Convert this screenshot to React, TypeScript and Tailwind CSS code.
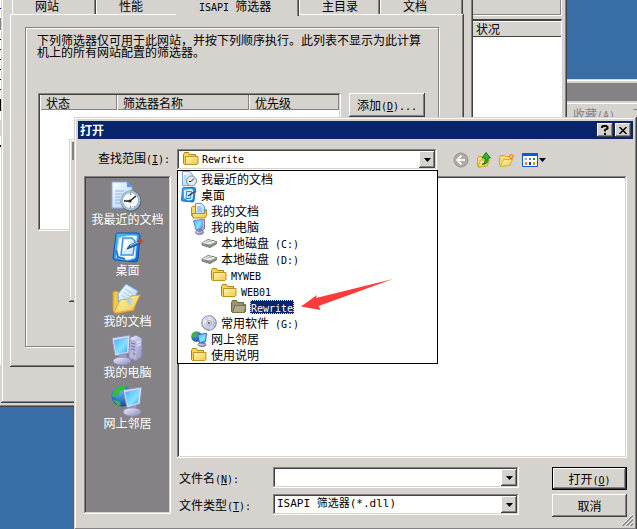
import type { ReactNode } from "react";

const windowEdge =
  "bg-[#d6d3ce] shadow-[inset_-1px_-1px_#424142,inset_1px_1px_#d6d3ce,inset_-2px_-2px_#848284,inset_2px_2px_#ffffff]";
const raised =
  "bg-[#d6d3ce] shadow-[inset_-1px_-1px_#424142,inset_1px_1px_#ffffff,inset_-2px_-2px_#848284]";
const sunken =
  "shadow-[inset_-1px_-1px_#ffffff,inset_1px_1px_#848284,inset_-2px_-2px_#d6d3ce,inset_2px_2px_#424142]";

/* Latin text, half the width of a Chinese character */
function En({ children }: { children: ReactNode }) {
  return (
    <span className="font-['DejaVu_Sans_Mono',monospace] text-[10px] leading-none whitespace-pre">
      {children}
    </span>
  );
}

function Gradients() {
  return (
    <svg className="absolute h-0 w-0" aria-hidden="true">
      <defs>
        <linearGradient id="folder" x1="0" y1="0" x2="1" y2="1">
          <stop offset="0" stopColor="#fff7b5" />
          <stop offset="1" stopColor="#efc74a" />
        </linearGradient>
        <linearGradient id="screen" x1="0" y1="0" x2="1" y2="1">
          <stop offset="0" stopColor="#4cacf4" />
          <stop offset="0.6" stopColor="#84e4ff" />
          <stop offset="1" stopColor="#3a9cf0" />
        </linearGradient>
        <linearGradient id="case" x1="0" y1="0" x2="1" y2="1">
          <stop offset="0" stopColor="#f4f4fc" />
          <stop offset="1" stopColor="#8888bc" />
        </linearGradient>
        <linearGradient id="paper" x1="0" y1="0" x2="1" y2="1">
          <stop offset="0" stopColor="#ffffff" />
          <stop offset="1" stopColor="#a8ccf4" />
        </linearGradient>
        <linearGradient id="blue" x1="0" y1="0" x2="1" y2="1">
          <stop offset="0" stopColor="#4cc4ff" />
          <stop offset="1" stopColor="#0a64d0" />
        </linearGradient>
        <radialGradient id="globe" cx="0.4" cy="0.3" r="0.8">
          <stop offset="0" stopColor="#5ab4ff" />
          <stop offset="1" stopColor="#0a3c9c" />
        </radialGradient>
        <radialGradient id="silver" cx="0.35" cy="0.3" r="0.8">
          <stop offset="0" stopColor="#ffffff" />
          <stop offset="1" stopColor="#a4a8c4" />
        </radialGradient>
      </defs>
    </svg>
  );
}

function Svg({ size, children }: { size: number; children: ReactNode }) {
  return (
    <svg
      width={size}
      height={size}
      viewBox={size === 32 ? "0 0 32 32" : "0 0 16 16"}
      className="shrink-0"
      aria-hidden="true"
    >
      {children}
    </svg>
  );
}

/* 32px icons of the places bar */

function RecentLarge() {
  return (
    <Svg size={32}>
      <path d="M1 1h15l5 5v21H1z" fill="url(#paper)" stroke="#84b0f0" />
      <path d="M16 1v5h5z" fill="#4c94ec" />
      <path d="M4 10h9M4 13h7M4 16h5M4 19h5M4 22h6" stroke="#84b4f4" />
      <circle cx="20" cy="20" r="10.500" fill="#566878" />
      <circle cx="19.500" cy="19.500" r="10" fill="#a4bccc" />
      <circle cx="19.500" cy="19.500" r="7.500" fill="#f3f8fb" />
      <path d="M19 20l6-5M19 20h-6" stroke="#222" strokeWidth="1.500" />
      <path d="M19.500 12v2M19.500 25v2M23 25l1 1" stroke="#789" />
      <circle cx="19" cy="20" r="1.500" fill="#222" />
    </Svg>
  );
}

function DesktopLarge() {
  return (
    <Svg size={32}>
      <path d="M4 3q0-2 2-2h19q3 0 3 3l-2 23q0 3-3 3L3 28q-2 0-2-2z" fill="url(#blue)" stroke="#0c58b4" />
      <path d="M7 6q6-3 18-2l-2 22-7 2q-7 0-12-3z" fill="#fcfcf0" stroke="#a4dcff" />
      <path d="M4 18l2 7 7 2" fill="none" stroke="#1c7cdc" strokeWidth="2" />
      <path d="M11 6h9l3 3-2 14H9z" fill="#d4ecff" stroke="#3c94e8" strokeWidth="1.500" />
      <path d="M12 8h7l-8 12z" fill="#fff" />
      <path d="M15 17l3-4 9-4 2 2-9 4z" fill="#3c78b4" stroke="#144878" />
      <path d="M18 13.500l8-3.500" stroke="#a4d4f4" />
      <path d="M27 10l3-2" stroke="#cc4428" strokeWidth="4" />
    </Svg>
  );
}

function DocumentsLarge() {
  return (
    <Svg size={32}>
      <path d="M2 9l2-1 4 1 1 3 15-3-1 18-18 4-3-3z" fill="#f4c850" stroke="#d09820" />
      <path d="M7 11L15 1l12 7-6 12-13 5z" fill="url(#paper)" stroke="#6ca8e8" />
      <path d="M12 9l8 5M14 6l8 5M10 12l8 5" stroke="#a4d0f8" />
      <path d="M3 30l6-13 9-1 2-3 9-1-7 15z" fill="url(#folder)" stroke="#dca830" />
      <path d="M15 18l7-3-3 8z" fill="#a8d0f8" />
    </Svg>
  );
}

function ComputerLarge() {
  return (
    <Svg size={32}>
      <path d="M18 4l7-3 6 3v19l-6 4-7-3z" fill="url(#case)" stroke="#8484b4" />
      <path d="M19 5l6 2v18l-6-2z" fill="#b4b4dc" />
      <path d="M20 9l4 1M20 12l4 1M20 15l4 1" stroke="#7070a8" />
      <path d="M26 9l4-2M26 12l4-2" stroke="#f0f0ff" />
      <circle cx="23" cy="20" r="1" fill="#48a848" />
      <path d="M8 18h7l1 7H7z" fill="#9ca0c8" />
      <ellipse cx="11" cy="27" rx="9" ry="4" fill="url(#case)" stroke="#8c8cb8" />
      <path d="M1 4l18-3-1 18-14 3z" fill="#dcdcf0" stroke="#8c8cbc" />
      <path d="M3 6l14-3-1 15-11 2z" fill="url(#screen)" />
    </Svg>
  );
}

function NetworkLarge() {
  return (
    <Svg size={32}>
      <circle cx="11" cy="11" r="10.500" fill="url(#globe)" />
      <path d="M4 4q5-4 11-3l-2 4-4 1-2 5-5 1-1-2zM2 15l6 1 2 4-3 1zM14 9l4 2-2 5-4-3z" fill="#3cb83c" />
      <path d="M18 20h7l1 5h-9z" fill="#9ca0c8" />
      <ellipse cx="21" cy="27" rx="9" ry="4.200" fill="url(#case)" stroke="#8c8cb8" />
      <path d="M12 5l19-3-2 17-13 4z" fill="#dcdcf0" stroke="#8c8cbc" />
      <path d="M14 7l15-3-2 14-10 3z" fill="url(#screen)" />
    </Svg>
  );
}

/* 16px icons of the drop-down */

function Recent() {
  return (
    <Svg size={16}>
      <path d="M1.500.5h7l3 3v11h-10z" fill="url(#paper)" stroke="#7ca4d8" />
      <path d="M3 5h3M3 7h2M3 9h2" stroke="#9cc0f0" />
      <circle cx="10.500" cy="10" r="5" fill="#dfe9f0" stroke="#7c90a0" />
      <path d="M10 10.500l3-3M10 10.500H8" stroke="#223" />
    </Svg>
  );
}

function Desktop() {
  return (
    <Svg size={16}>
      <path d="M1.500 2q0-1.500 1.500-1.500h10q1.500 0 1.500 1l-1.500 12q0 1.500-1.500 1.500L1.500 14q-1 0-1-1z" fill="url(#blue)" stroke="#1478d8" />
      <path d="M3.500 3.500L11 2.500l1 2-1 8-4 .5-3.500-2z" fill="#fcfcf4" stroke="#d8f0ff" />
      <path d="M5.500 4.500h5l-1 7h-4.500z" fill="#d4ecff" stroke="#2c84d8" />
      <path d="M7 9L13 5" stroke="#144878" strokeWidth="1.500" />
      <path d="M13 5.500l2-1.500" stroke="#c43c20" strokeWidth="2" />
    </Svg>
  );
}

function Documents() {
  return (
    <Svg size={16}>
      <path d="M.5 4.500l1-1h3v10h-3l-1-1z" fill="#f7d76b" stroke="#b58a18" />
      <path d="M4.500.5h6l3 3v9h-9z" fill="url(#paper)" stroke="#5a94dc" />
      <path d="M6 4h4M6 6h5M6 8h5" stroke="#6ca4e4" />
      <path d="M1.500 10.500h12l1-4h1v6l-1.500 2.500h-12z" fill="url(#folder)" stroke="#b58a18" />
    </Svg>
  );
}

function Computer() {
  return (
    <Svg size={16}>
      <path d="M10 1l3.500-.5v9.500l-3 2z" fill="url(#case)" stroke="#7878ac" />
      <ellipse cx="8.500" cy="13.200" rx="4" ry="2.200" fill="url(#case)" stroke="#6c6ca4" />
      <path d="M7 10h3v3H7z" fill="#8488b4" />
      <path d="M2.500 1.500l8.500-1v8.500l-6 2z" fill="url(#screen)" stroke="#5c88cc" />
    </Svg>
  );
}

function Disk() {
  return (
    <Svg size={16}>
      <path d="M1 8l6-3.500 8.500 2v2.500L9 12.500 1 10z" fill="#8c8e8c" stroke="#787a78" />
      <path d="M1 8l6-3 8 1.700L9 9.500z" fill="#ececec" />
      <path d="M5 7.500l4-1.500 2 .8" stroke="#b4b4b4" fill="none" />
      <path d="M11.500 10l2-.8" stroke="#64cc64" />
    </Svg>
  );
}

function Folder({ open }: { open?: boolean }) {
  return (
    <Svg size={16}>
      <path
        d="M.5 3.500l1-2h4l1 2h6v2h2v7l-1 1h-12l-1-1z"
        fill={open ? "#98947c" : "#f7d35a"}
        stroke={open ? "#686444" : "#ad8414"}
      />
      <path
        d={open ? "M1.500 13.500l2.500-7h11l-2 7z" : "M2.500 5.500h12.500v7l-1 1h-11.500z"}
        fill={open ? "#b0ac84" : "url(#folder)"}
        stroke={open ? "#787450" : "#bd9420"}
      />
    </Svg>
  );
}

function Cd() {
  return (
    <Svg size={16}>
      <circle cx="8" cy="8" r="7.300" fill="url(#silver)" stroke="#8488a8" />
      <path d="M8 8L3 3.500A7 7 0 0 1 7 1zM8 8l5 4.500A7 7 0 0 1 9 15z" fill="#d8c8f4" />
      <circle cx="8" cy="8" r="2.300" fill="#fff" stroke="#9498b8" />
      <circle cx="8" cy="8" r="1" fill="#445" />
    </Svg>
  );
}

function Network() {
  return (
    <Svg size={16}>
      <circle cx="5.500" cy="5.500" r="5.300" fill="url(#globe)" />
      <path d="M1 3q3-3 6-2L5 4 3 7 1 6zM2 8l3 1v1z" fill="#38b838" />
      <ellipse cx="11" cy="13.500" rx="4" ry="2" fill="url(#case)" stroke="#7474a8" />
      <path d="M10 11h3v2h-3z" fill="#8488b4" />
      <path d="M6.500 3.500l9-1-1 8-6 1.500z" fill="url(#screen)" stroke="#3c64a4" />
    </Svg>
  );
}

/* Toolbar icons */

function Back() {
  return (
    <Svg size={16}>
      <circle cx="8" cy="8" r="7" fill="#adaaa5" stroke="#94928c" />
      <path d="M8.500 3.500L4 8l4.500 4.500M4.500 8H12" fill="none" stroke="#f0f0ee" strokeWidth="2" />
    </Svg>
  );
}

function UpFolder() {
  return (
    <Svg size={16}>
      <path d="M1.500 5.500l1-1h3l1 1h5v8l-9 1.500-1-1z" fill="#f7db73" stroke="#d8a420" />
      <path d="M2 15l2.500-7h9l-2.500 6z" fill="url(#folder)" stroke="#d8a420" />
      <path d="M6 12.500q4-2 3-6.500H6l4-5.500L14.500 6H12q1 6-6 6.500z" fill="#31b521" stroke="#147810" />
    </Svg>
  );
}

function NewFolder() {
  return (
    <Svg size={16}>
      <path d="M.5 5.500l1-2h4l1 1h5v8l-9 2-2-1z" fill="#f7db73" stroke="#d8a420" />
      <path d="M1.500 14.500l3-7h9l-3 6z" fill="url(#folder)" stroke="#dcb034" />
      <path d="M12.500 2v5M10 4.500h5M11 3l3 3M14 3l-3 3" stroke="#ef7131" strokeWidth="1.500" />
      <circle cx="12.500" cy="4.500" r="1.300" fill="#ffd890" />
    </Svg>
  );
}

function Views() {
  return (
    <Svg size={16}>
      <path d="M.5 1.500h15v13H.5z" fill="#fff" stroke="#0c5ccc" />
      <path d="M0 1h16v3H0z" fill="#0c5ccc" />
      <path d="M3 6h2v2H3z" fill="#a49cc4" />
      <path d="M7 6h2v2H7z" fill="#3c84e4" />
      <path d="M11 6h2v2h-2z" fill="#189418" />
      <path d="M3 10h2v3H3z" fill="#f07850" />
      <path d="M7 10h2v3H7z" fill="#103ca4" />
      <path d="M11 10h2v3h-2z" fill="#d0a010" />
    </Svg>
  );
}

function Triangle() {
  return (
    <svg width="7" height="4" viewBox="0 0 7 4" className="shrink-0" aria-hidden="true">
      <path d="M0 0h7L3.500 4z" fill="#000" />
    </svg>
  );
}

function DropArrow() {
  return (
    <span className={`pointer-events-none flex w-4 shrink-0 items-center justify-center ${raised}`}>
      <Triangle />
    </span>
  );
}

const places = [
  { name: "我最近的文档", icon: <RecentLarge /> },
  { name: "桌面", icon: <DesktopLarge /> },
  { name: "我的文档", icon: <DocumentsLarge /> },
  { name: "我的电脑", icon: <ComputerLarge /> },
  { name: "网上邻居", icon: <NetworkLarge /> },
];

const folders = [
  { zh: "我最近的文档", en: "", indent: "pl-[3px]", icon: <Recent /> },
  { zh: "桌面", en: "", indent: "pl-[3px]", icon: <Desktop /> },
  { zh: "我的文档", en: "", indent: "pl-[13px]", icon: <Documents /> },
  { zh: "我的电脑", en: "", indent: "pl-[13px]", icon: <Computer /> },
  { zh: "本地磁盘", en: " (C:)", indent: "pl-[23px]", icon: <Disk /> },
  { zh: "本地磁盘", en: " (D:)", indent: "pl-[23px]", icon: <Disk /> },
  { zh: "", en: "MYWEB", indent: "pl-[33px]", icon: <Folder /> },
  { zh: "", en: "WEB01", indent: "pl-[43px]", icon: <Folder /> },
  { zh: "", en: "Rewrite", indent: "pl-[53px]", icon: <Folder open />, selected: true },
  { zh: "常用软件", en: " (G:)", indent: "pl-[23px]", icon: <Cd /> },
  { zh: "网上邻居", en: "", indent: "pl-[13px]", icon: <Network /> },
  { zh: "使用说明", en: "", indent: "pl-[13px]", icon: <Folder /> },
];

const tabs = [
  { zh: "网站", width: "w-[84px]" },
  { zh: "性能", width: "w-[80px]" },
  { zh: "筛选器", en: "ISAPI ", width: "w-[123px]", active: true },
  { zh: "主目录", width: "w-[81px]" },
  { zh: "文档", width: "w-[83px]" },
];

function ConsoleWindow() {
  return (
    <section className={`absolute -top-1 -left-1 flex h-[411px] w-[571px] justify-between pt-1 pr-[5px] pl-1 ${windowEdge}`}>
      <div className="flex h-[365px] w-1 flex-col gap-[9px] bg-white pt-2">
        <i className="h-px bg-[#0000ff]" />
        <i className="h-3 bg-[#848284]" />
        <i className="h-px bg-black" />
        <i className="h-px bg-black" />
        <i className="h-px bg-black" />
        <i className="h-px bg-black" />
        <i className="h-px bg-black" />
        <i className="h-px bg-black" />
        <i className="h-3 bg-black" />
        <i className="h-4 bg-[#d6d3ce]" />
        <i className="h-0.5 bg-black" />
      </div>
      <div className="flex w-[92px] flex-col">
        <div className="h-4 border-r border-b border-white shadow-[inset_-1px_-1px_#848284]" />
        <div className="mt-[3px] flex-1 border-t-2 border-r border-t-[#424142] border-r-white bg-white">
          <div className="h-4 border-b border-[#424142] bg-[#d6d3ce] pl-1.5 leading-[15px] shadow-[inset_0_1px_#fff]">
            状况
          </div>
        </div>
      </div>
    </section>
  );
}

function BrowserWindow() {
  return (
    <section className={`absolute top-[79px] -right-10 left-[563px] h-[60px] px-1 pt-1 ${windowEdge}`}>
      <div className="h-[18px] bg-[#848284]" />
      <div className="mt-0.5 flex gap-[17px] border-t border-white pt-[3px] pl-1.5 leading-[14px] whitespace-nowrap text-[#848284]">
        <span>
          收藏<En>(<u>A</u>)</En>
        </span>
        <span>工具</span>
      </div>
    </section>
  );
}

function PropertiesWindow() {
  return (
    <section className={`absolute -top-1 left-px flex h-[407px] w-[472px] flex-col px-[9px] pt-1 pb-9 ${windowEdge}`}>
      <div role="tablist" className="flex h-3.5 shrink-0 pl-0.5">
        {tabs.map((tab) => (
          <button
            key={tab.zh}
            role="tab"
            aria-selected={!!tab.active}
            className={`flex items-baseline pl-[23px] leading-[12px] whitespace-pre ${tab.width} ${
              tab.active
                ? "relative h-4 bg-[#d6d3ce] shadow-[inset_-1px_0_#424142,inset_-2px_0_#848284]"
                : tab.zh === "性能"
                  ? "shadow-[inset_1px_0_#ffffff]"
                  : "shadow-[inset_1px_0_#ffffff,inset_-1px_0_#424142,inset_-2px_0_#848284]"
            }`}
          >
            {tab.en && <En>{tab.en}</En>}
            {tab.zh}
          </button>
        ))}
      </div>
      <div className={`flex-1 pt-[13px] pr-[25px] pb-5 pl-[15px] ${raised}`}>
        <div className="h-full border border-[#848284] pt-1.5 pl-[11px] shadow-[inset_1px_1px_#ffffff,1px_1px_#ffffff]">
          <p className="leading-[12px] whitespace-nowrap">
            下列筛选器仅可用于此网站，并按下列顺序执行。此列表不显示为此计算
            <br />
            机上的所有网站配置的筛选器。
          </p>
          <div className="mt-[35px] flex gap-2 pl-px">
            <div className={`h-[138px] w-[303px] bg-white p-0.5 ${sunken}`}>
              <table className="w-full table-fixed border-collapse text-left">
                <thead>
                  <tr className="h-[15px] bg-[#d6d3ce] leading-[14px] *:p-0 *:pl-1.5 *:font-normal *:shadow-[inset_1px_0_#ffffff,inset_-1px_-1px_#848284]">
                    <th className="w-[77px]">状态</th>
                    <th className="w-[132px]">筛选器名称</th>
                    <th>优先级</th>
                  </tr>
                </thead>
              </table>
            </div>
            <button className={`h-6 w-[76px] leading-[14px] ${raised}`}>
              添加<En>(<u>D</u>)...</En>
            </button>
          </div>
        </div>
      </div>
    </section>
  );
}

function LookIn() {
  return (
    <div className="relative w-[260px]">
      <div className={`flex h-[21px] bg-white p-0.5 ${sunken}`}>
        <span className="pl-1">
          <Folder />
        </span>
        <select
          id="look-in"
          className="min-w-0 flex-1 appearance-none bg-transparent pl-[3px] font-['DejaVu_Sans_Mono',monospace] text-[10px] outline-none"
        >
          <option>Rewrite</option>
        </select>
        <DropArrow />
      </div>
      <ul role="listbox" className="absolute top-full left-0 z-10 w-[261px] border border-black bg-white">
        {folders.map((folder, i) => (
          <li
            key={i}
            role="option"
            aria-selected={!!folder.selected}
            className={`flex h-4 items-center gap-[3px] leading-[14px] ${folder.indent}`}
          >
            {folder.icon}
            <span
              className={
                folder.selected
                  ? "bg-[#08246b] px-px text-white outline-1 -outline-offset-1 outline-[#f7db94] outline-dotted"
                  : "px-px"
              }
            >
              {folder.zh}
              {folder.en && <En>{folder.en}</En>}
            </span>
          </li>
        ))}
        {/* Pointer at the chosen folder */}
        <svg
          width="93"
          height="32"
          viewBox="0 0 93 32"
          className="pointer-events-none absolute top-[108px] left-[123px]"
          aria-hidden="true"
        >
          <path d="M0 27.500L16 16l-1 3L92 0 17.500 27l2 4z" fill="#ff3a3a" />
        </svg>
      </ul>
    </div>
  );
}

function OpenDialog() {
  return (
    <section
      role="dialog"
      aria-labelledby="dialog-title"
      className={`absolute top-[117px] right-0 -bottom-px left-[74px] flex flex-col p-1 ${windowEdge}`}
    >
      <header className="flex h-[18px] shrink-0 items-center gap-0.5 bg-[#08246b] px-0.5">
        <h1 id="dialog-title" className="flex-1 text-xs font-bold text-white">
          打开
        </h1>
        <button aria-label="帮助" className={`flex h-3.5 w-4 items-center justify-center ${raised}`}>
          <svg width="8" height="10" viewBox="0 0 8 10" aria-hidden="true">
            <path d="M1 3V2l1-1h3l1.500 1v1.500L4 5v1.500M4 8v2" fill="none" stroke="#000" strokeWidth="2" />
          </svg>
        </button>
        <button aria-label="关闭" className={`flex h-3.5 w-4 items-center justify-center ${raised}`}>
          <svg width="8" height="7" viewBox="0 0 8 7" aria-hidden="true">
            <path d="M.5 0l7 7M7.500 0l-7 7" stroke="#000" strokeWidth="1.500" />
          </svg>
        </button>
      </header>

      <div className="flex h-[37px] shrink-0 items-center px-1.5">
        <label htmlFor="look-in" className="w-[93px] pl-3.5 leading-[14px]">
          查找范围<En>(<u>I</u>):</En>
        </label>
        <div className="flex items-center gap-4 pt-1">
          <LookIn />
          <div className="flex items-center gap-[7px]">
            <button aria-label="后退">
              <Back />
            </button>
            <button aria-label="向上一级">
              <UpFolder />
            </button>
            <button aria-label="新建文件夹">
              <NewFolder />
            </button>
            <button aria-label="查看" className="flex items-center gap-px">
              <Views />
              <Triangle />
            </button>
          </div>
        </div>
      </div>

      <div className="flex flex-1 gap-1.5 px-1.5 pb-[9px]">
        <nav className={`mb-[3px] flex w-[87px] flex-col items-center gap-[7px] bg-[#848284] pt-[5px] ${sunken}`}>
          {places.map((place) => (
            <button key={place.name} className="flex flex-col items-center leading-[12px] text-white">
              {place.icon}
              {place.name}
            </button>
          ))}
        </nav>

        <div className="flex min-w-0 flex-1 flex-col">
          <div className={`mb-[9px] flex-1 bg-white ${sunken}`} />
          <div className="grid auto-rows-[23px] grid-cols-[96px_1fr_75px] gap-y-1">
            <label htmlFor="file-name" className="pl-0.5 leading-[22px]">
              文件名<En>(<u>N</u>):</En>
            </label>
            <div className={`mr-[33px] flex h-[21px] bg-white p-0.5 ${sunken}`}>
              <input id="file-name" className="min-w-0 flex-1 bg-transparent px-0.5 outline-none" />
              <DropArrow />
            </div>
            <button className="h-[23px] border border-black bg-[#d6d3ce] leading-[14px] shadow-[inset_-1px_-1px_#424142,inset_1px_1px_#ffffff,inset_-2px_-2px_#848284]">
              打开<En>(<u>O</u>)</En>
            </button>

            <label htmlFor="file-type" className="pl-0.5 leading-[22px]">
              文件类型<En>(<u>T</u>):</En>
            </label>
            <div className={`mr-[33px] flex h-[21px] bg-white p-0.5 ${sunken}`}>
              <select
                id="file-type"
                className="min-w-0 flex-1 appearance-none bg-transparent pl-0.5 font-['DejaVu_Sans_Mono','Noto_Sans_CJK_SC',monospace] text-[11px] outline-none"
              >
                <option>ISAPI 筛选器(*.dll)</option>
              </select>
              <DropArrow />
            </div>
            <button className={`h-[23px] leading-[14px] ${raised}`}>取消</button>
          </div>
        </div>
      </div>

      <svg width="12" height="12" viewBox="0 0 12 12" className="absolute right-1 bottom-1" aria-hidden="true">
        <path d="M0 12L12 0M4 12l8-8M8 12l4-4" stroke="#ffffff" />
        <path d="M1.500 12L12 1.500M5.500 12L12 5.500M9.500 12L12 9.500" stroke="#848284" strokeWidth="1.500" />
      </svg>
    </section>
  );
}

export default function App() {
  return (
    <main className="relative min-h-screen w-full overflow-hidden bg-[#396da5] font-['Noto_Sans_CJK_SC',sans-serif] text-xs text-black">
      <Gradients />
      <BrowserWindow />
      <ConsoleWindow />
      <PropertiesWindow />
      {/* Small window, mostly behind the dialog */}
      <section className={`absolute top-[139px] left-[69px] h-[163px] w-24 p-[3px] ${windowEdge}`}>
        <div className="h-[18px] bg-[#848284]" />
      </section>
      <OpenDialog />
    </main>
  );
}
